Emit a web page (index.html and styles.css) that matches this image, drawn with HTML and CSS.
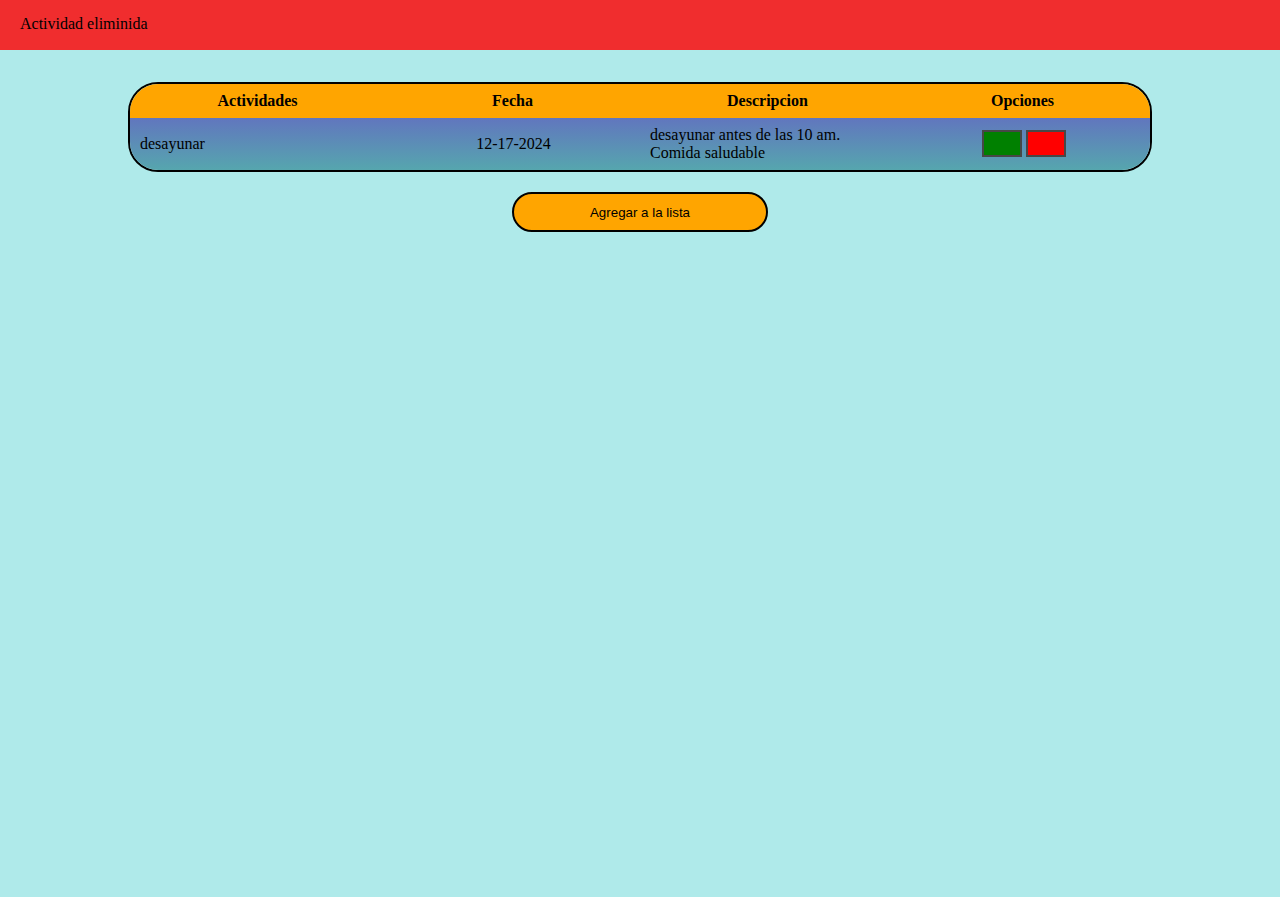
FILE: index.html
```html
<!DOCTYPE html>
<html lang="es">
<head>
<meta charset="utf-8">
<title>Actividades</title>
<link rel="stylesheet" href="styles.css">
</head>
<body>
<header class="alerta">Actividad eliminida</header>
<main class="contenido">
  <table class="tabla">
    <thead>
      <tr>
        <th>Actividades</th>
        <th>Fecha</th>
        <th>Descripcion</th>
        <th>Opciones</th>
      </tr>
    </thead>
    <tbody>
      <tr>
        <td class="izq">desayunar</td>
        <td class="centro fecha">12-17-2024</td>
        <td class="izq">desayunar antes de las 10 am.<br>Comida saludable</td>
        <td class="centro opciones"><button class="btn verde" aria-label="editar"></button> <button class="btn rojo" aria-label="eliminar"></button></td>
      </tr>
    </tbody>
  </table>
  <button class="agregar">Agregar a la lista</button>
</main>
</body>
</html>
```
FILE: styles.css
```css
html, body {
  margin: 0;
  padding: 0;
}
body {
  background: #afeaea;
  font-family: "Liberation Serif", "Times New Roman", serif;
  font-size: 16px;
  color: #000;
  min-height: 897px;
}
.alerta {
  background: #f02d2e;
  height: 50px;
  line-height: 48px;
  padding-left: 20px;
  box-sizing: border-box;
}
.contenido {
  display: flex;
  flex-direction: column;
  align-items: center;
  padding-top: 32px;
  gap: 20px;
}
.tabla {
  width: 1024px;
  table-layout: fixed;
  border-collapse: separate;
  border-spacing: 0;
  border: 2px solid #000;
  border-radius: 30px;
  overflow: hidden;
}
.tabla th {
  background: #ffa500;
  height: 34px;
  padding: 0;
  font-weight: bold;
  text-align: center;
}
.tabla tbody tr {
  background: linear-gradient(#6176be, #56a6ae);
}
.tabla td {
  height: 52px;
  box-sizing: border-box;
  padding: 0 10px;
  line-height: 18px;
  vertical-align: middle;
}
.izq { text-align: left; }
.centro { text-align: center; }
.fecha { padding-left: 12px !important; }
.opciones { padding: 0 10px 2px 12px !important; }
.btn {
  width: 40px;
  height: 27px;
  border: 2px solid #474747;
  padding: 0;
  margin: 0;
  vertical-align: middle;
}
.verde { background: #008000; }
.rojo { background: #ff0000; }
.agregar {
  width: 256px;
  height: 40px;
  background: #ffa500;
  border: 2px solid #000;
  border-radius: 20px;
  font-family: "Liberation Sans", Arial, sans-serif;
  font-size: 13.33px;
  color: #000;
  padding: 0;
}
```
